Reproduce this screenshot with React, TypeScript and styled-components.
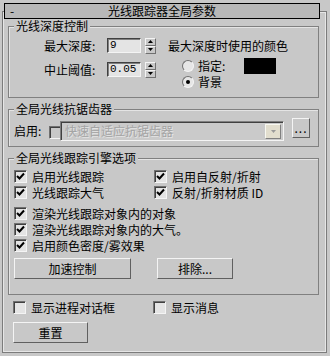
import styled, { createGlobalStyle } from "styled-components"

const GlobalStyle = createGlobalStyle`
  html, body {
    margin: 0;
    padding: 0;
    background: #c8c8c8;
  }
  body {
    font-family: "Noto Sans CJK SC", "Noto Sans", sans-serif;
    font-size: 12px;
    color: #000;
  }
  * { box-sizing: border-box; }
`

const Root = styled.div`
  width: 330px;
  height: 356px;
  padding: 11px 0 0 2px;
  overflow: hidden;
`

const Panel = styled.div`
  width: 325px;
  height: 342px;
  border: 1px solid #7c7c7c;
  box-shadow: inset 1px 1px 0 #e6e6e6, inset -1px -1px 0 #e6e6e6;
`

const TitleBar = styled.div`
  display: grid;
  grid-template-columns: 1fr auto 1fr;
  align-items: center;
  margin: -9px 0 0 1px;
  width: 316px;
  height: 16px;
  border: 1px solid #000;
  background: #b8b8b8;
  line-height: 12px;
`

const Dash = styled.span`
  padding-left: 5px;
`

const Group = styled.div<{ $h: number; $top: number }>`
  margin: ${(p) => p.$top}px 0 0 5px;
  width: 311px;
  height: ${(p) => p.$h}px;
  border: 1px solid #808080;
  box-shadow: inset 1px 1px 0 #e4e4e4;
`

const Legend = styled.div`
  display: table;
  margin: -7px 0 0 5px;
  padding: 0 2px;
  height: 12px;
  line-height: 12px;
  background: #c8c8c8;
`

const DepthBody = styled.div`
  display: flex;
  padding-left: 35px;
`

const DepthCol = styled.div`
  width: 124px;
  display: flex;
  flex-direction: column;
`

const FieldRow = styled.div<{ $top: number }>`
  display: flex;
  align-items: center;
  height: 15px;
  margin-top: ${(p) => p.$top}px;
`

const FieldLabel = styled.span`
  width: 63px;
  line-height: 12px;
`

const NumInput = styled.div`
  width: 34px;
  height: 15px;
  border: 1px solid;
  border-color: #404040 #f4f4f4 #f4f4f4 #404040;
  box-shadow: inset 1px 1px 0 #808080;
  background: #e4e4e4;
  font-family: "Liberation Mono", monospace;
  font-size: 11px;
  line-height: 13px;
  padding-left: 2px;
`

const Spinner = styled.div`
  margin-left: 4px;
  width: 11px;
  height: 16px;
  display: flex;
  flex-direction: column;
`

const SpinHalf = styled.div`
  flex: 1;
  display: flex;
  align-items: center;
  justify-content: center;
  border: 1px solid;
  border-color: #f4f4f4 #707070 #707070 #f4f4f4;
  background: #c8c8c8;
`

const ColorCol = styled.div`
  display: flex;
  flex-direction: column;
`

const ColorTitle = styled.div`
  margin-top: 8px;
  line-height: 12px;
`

const RadioRow = styled.div<{ $top: number; $h: number }>`
  display: flex;
  align-items: center;
  margin-top: ${(p) => p.$top}px;
  height: ${(p) => p.$h}px;
  padding-left: 14px;
  line-height: 12px;
`

const Radio = styled.span<{ $on?: boolean }>`
  width: 12px;
  height: 12px;
  border-radius: 50%;
  border: 1px solid;
  border-color: #707070 #f4f4f4 #f4f4f4 #707070;
  background: #e6e6e6;
  margin-right: 4px;
  display: flex;
  align-items: center;
  justify-content: center;
  &::after {
    content: "";
    width: 4px;
    height: 4px;
    border-radius: 50%;
    background: ${(p) => (p.$on ? "#000" : "transparent")};
  }
`

const RadioText = styled.span<{ $w?: number }>`
  width: ${(p) => (p.$w ? `${p.$w}px` : "auto")};
`

const Swatch = styled.div`
  width: 32px;
  height: 16px;
  background: #000;
`

const AARow = styled.div`
  display: flex;
  align-items: flex-start;
  margin-top: 6px;
  padding-left: 5px;
`

const AALabel = styled.span`
  width: 35px;
  margin-top: 4px;
  line-height: 12px;
`

const Box = styled.span<{ $disabled?: boolean; $w?: number; $top?: number }>`
  flex: none;
  width: ${(p) => p.$w ?? 13}px;
  height: 13px;
  margin-top: ${(p) => p.$top ?? 0}px;
  border: 1px solid;
  border-color: #707070 #f4f4f4 #f4f4f4 #707070;
  border-right-width: ${(p) => (p.$w ? 0 : 1)}px;
  box-shadow: inset 1px 1px 0 #404040;
  background: ${(p) => (p.$disabled ? "#c8c8c8" : "#e4e4e4")};
  display: flex;
  align-items: center;
  justify-content: center;
`

const Dropdown = styled.div`
  width: 224px;
  height: 20px;
  border: 1px solid;
  border-color: #808080 #f4f4f4 #f4f4f4 #808080;
  box-shadow: inset 1px 1px 0 #404040;
  background: #cacaca;
  display: flex;
  align-items: center;
  padding: 0 2px 0 4px;
  color: #a4a4a4;
  text-shadow: 1px 1px 0 #e4e4e4;
  line-height: 12px;
`

const DropText = styled.span`
  flex: 1;
`

const DropArrow = styled.div`
  width: 16px;
  height: 15px;
  border: 1px solid;
  border-color: #f8f8f0 #808080 #808080 #f8f8f0;
  background: #e2dece;
  display: flex;
  align-items: center;
  justify-content: center;
`

const Button = styled.div<{ $w: number; $h?: number }>`
  flex: none;
  width: ${(p) => p.$w}px;
  height: ${(p) => p.$h ?? 21}px;
  border: 1px solid;
  border-color: #f4f4f4 #606060 #606060 #f4f4f4;
  background: #c8c8c8;
  display: flex;
  align-items: center;
  justify-content: center;
  line-height: 12px;
`

const DotsButton = styled(Button)`
  margin: -3px 0 0 8px;
  letter-spacing: 1px;
`

const CheckGrid = styled.div<{ $top: number; $cols?: number }>`
  display: grid;
  grid-template-columns: ${(p) => (p.$cols === 2 ? "140px 1fr" : "1fr")};
  row-gap: 3px;
  margin-top: ${(p) => p.$top}px;
  padding-left: 5px;
`

const CheckItem = styled.label`
  display: flex;
  align-items: center;
  height: 13px;
  gap: 5px;
  line-height: 12px;
  white-space: nowrap;
`

const ButtonRow = styled.div<{ $top: number; $gap: number }>`
  display: flex;
  gap: ${(p) => p.$gap}px;
  margin-top: ${(p) => p.$top}px;
  padding-left: 5px;
`

const Footer = styled.div`
  padding-left: 10px;
`

const FooterChecks = styled(CheckGrid)`
  padding-left: 0;
`

const FooterButtons = styled(ButtonRow)`
  padding-left: 0;
`

const Tick = () => (
  <svg width="9" height="9" viewBox="0 0 9 9">
    <path d="M1 4 L3.5 6.5 L8 1.5" fill="none" stroke="#000" strokeWidth="2" />
  </svg>
)

const Tri = ({ up, color = "#000" }: { up?: boolean; color?: string }) => (
  <svg width="5" height="3" viewBox="0 0 5 3">
    <path d={up ? "M0 3 L2.5 0 L5 3 Z" : "M0 0 L5 0 L2.5 3 Z"} fill={color} />
  </svg>
)

const Check = ({ text, on = true }: { text: string; on?: boolean }) => (
  <CheckItem>
    <Box>{on && <Tick />}</Box>
    <span>{text}</span>
  </CheckItem>
)

const Spin = () => (
  <Spinner>
    <SpinHalf><Tri up /></SpinHalf>
    <SpinHalf><Tri /></SpinHalf>
  </Spinner>
)

export default function App() {
  return (
    <Root>
      <GlobalStyle />
      <Panel>
        <TitleBar>
          <Dash>-</Dash>
          <span>光线跟踪器全局参数</span>
          <span />
        </TitleBar>

        <Group $top={7} $h={72}>
          <Legend>光线深度控制</Legend>
          <DepthBody>
            <DepthCol>
              <FieldRow $top={6}>
                <FieldLabel>最大深度:</FieldLabel>
                <NumInput>9</NumInput>
                <Spin />
              </FieldRow>
              <FieldRow $top={9}>
                <FieldLabel>中止阈值:</FieldLabel>
                <NumInput>0.05</NumInput>
                <Spin />
              </FieldRow>
            </DepthCol>
            <ColorCol>
              <ColorTitle>最大深度时使用的颜色</ColorTitle>
              <RadioRow $top={6} $h={16}>
                <Radio />
                <RadioText $w={46}>指定:</RadioText>
                <Swatch />
              </RadioRow>
              <RadioRow $top={2} $h={12}>
                <Radio $on />
                <RadioText>背景</RadioText>
              </RadioRow>
            </ColorCol>
          </DepthBody>
        </Group>

        <Group $top={11} $h={38}>
          <Legend>全局光线抗锯齿器</Legend>
          <AARow>
            <AALabel>启用:</AALabel>
            <Box $disabled $w={11} $top={5} />
            <Dropdown>
              <DropText>快速自适应抗锯齿器</DropText>
              <DropArrow><Tri color="#9a9a9a" /></DropArrow>
            </Dropdown>
            <DotsButton $w={18} $h={20}>...</DotsButton>
          </AARow>
        </Group>

        <Group $top={11} $h={137}>
          <Legend>全局光线跟踪引擎选项</Legend>
          <CheckGrid $top={6} $cols={2}>
            <Check text="启用光线跟踪" />
            <Check text="启用自反射/折射" />
            <Check text="光线跟踪大气" />
            <Check text="反射/折射材质 ID" />
          </CheckGrid>
          <CheckGrid $top={8}>
            <Check text="渲染光线跟踪对象内的对象" />
            <Check text="渲染光线跟踪对象内的大气。" />
            <Check text="启用颜色密度/雾效果" />
          </CheckGrid>
          <ButtonRow $top={6} $gap={26}>
            <Button $w={117}>加速控制</Button>
            <Button $w={76}>排除...</Button>
          </ButtonRow>
        </Group>

        <Footer>
          <FooterChecks $top={6} $cols={2}>
            <Check text="显示进程对话框" on={false} />
            <Check text="显示消息" on={false} />
          </FooterChecks>
          <FooterButtons $top={8} $gap={0}>
            <Button $w={75}>重置</Button>
          </FooterButtons>
        </Footer>
      </Panel>
    </Root>
  )
}
